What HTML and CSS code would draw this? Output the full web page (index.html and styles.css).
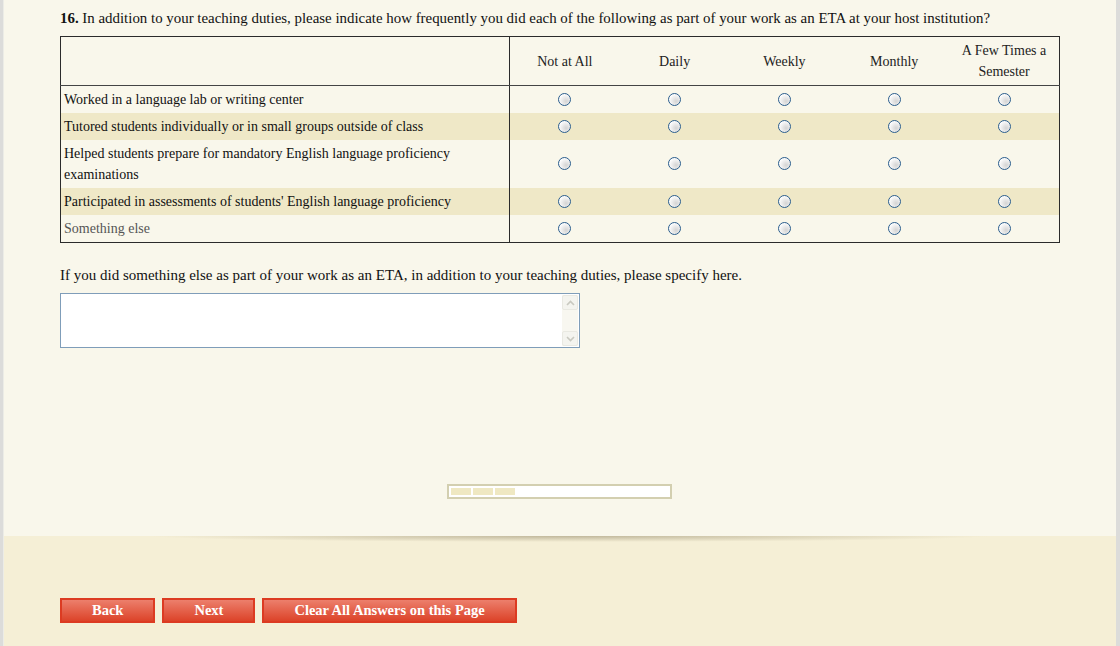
FILE: index.html
```html
<!DOCTYPE html>
<html lang="en">
<head>
    <meta charset="UTF-8">
    <title>ETA Survey - Question 16</title>
    <link rel="stylesheet" href="styles.css">
</head>
<body>
    <div class="page">
        <div class="main">
            <p class="question"><b>16.</b> In addition to your teaching duties, please indicate how frequently you did each of the following as part of your work as an ETA at your host institution?</p>
            <table class="grid">
                <thead>
                    <tr>
                        <th class="label-col"></th>
                        <th>Not at All</th>
                        <th>Daily</th>
                        <th>Weekly</th>
                        <th>Monthly</th>
                        <th>A Few Times a<br>Semester</th>
                    </tr>
                </thead>
                <tbody>
                    <tr>
                        <td class="label">Worked in a language lab or writing center</td>
                        <td><input class="radio" type="radio" name="r1"></td>
                        <td><input class="radio" type="radio" name="r1"></td>
                        <td><input class="radio" type="radio" name="r1"></td>
                        <td><input class="radio" type="radio" name="r1"></td>
                        <td><input class="radio" type="radio" name="r1"></td>
                    </tr>
                    <tr class="alt">
                        <td class="label">Tutored students individually or in small groups outside of class</td>
                        <td><input class="radio" type="radio" name="r2"></td>
                        <td><input class="radio" type="radio" name="r2"></td>
                        <td><input class="radio" type="radio" name="r2"></td>
                        <td><input class="radio" type="radio" name="r2"></td>
                        <td><input class="radio" type="radio" name="r2"></td>
                    </tr>
                    <tr>
                        <td class="label">Helped students prepare for mandatory English language proficiency<br>examinations</td>
                        <td><input class="radio" type="radio" name="r3"></td>
                        <td><input class="radio" type="radio" name="r3"></td>
                        <td><input class="radio" type="radio" name="r3"></td>
                        <td><input class="radio" type="radio" name="r3"></td>
                        <td><input class="radio" type="radio" name="r3"></td>
                    </tr>
                    <tr class="alt">
                        <td class="label">Participated in assessments of students' English language proficiency</td>
                        <td><input class="radio" type="radio" name="r4"></td>
                        <td><input class="radio" type="radio" name="r4"></td>
                        <td><input class="radio" type="radio" name="r4"></td>
                        <td><input class="radio" type="radio" name="r4"></td>
                        <td><input class="radio" type="radio" name="r4"></td>
                    </tr>
                    <tr>
                        <td class="label other">Something else</td>
                        <td><input class="radio" type="radio" name="r5"></td>
                        <td><input class="radio" type="radio" name="r5"></td>
                        <td><input class="radio" type="radio" name="r5"></td>
                        <td><input class="radio" type="radio" name="r5"></td>
                        <td><input class="radio" type="radio" name="r5"></td>
                    </tr>
                </tbody>
            </table>

            <p class="prompt">If you did something else as part of your work as an ETA, in addition to your teaching duties, please specify here.</p>
            <div class="textbox">
                <textarea></textarea>
                <div class="scroll">
                    <span class="arrow">
                        <svg width="9" height="6" viewBox="0 0 9 6"><path d="M1 5 L4.5 1.5 L8 5" fill="none" stroke="#c9c9c0" stroke-width="1.6"/></svg>
                    </span>
                    <span class="arrow">
                        <svg width="9" height="6" viewBox="0 0 9 6"><path d="M1 1 L4.5 4.5 L8 1" fill="none" stroke="#c9c9c0" stroke-width="1.6"/></svg>
                    </span>
                </div>
            </div>

            <div class="progress">
                <span></span><span></span><span></span>
            </div>
        </div>

        <div class="footer">
            <div class="shade"></div>
            <div class="buttons">
                <button class="btn">Back</button>
                <button class="btn">Next</button>
                <button class="btn">Clear All Answers on this Page</button>
            </div>
        </div>
    </div>
</body>
</html>
```

FILE: styles.css
```css
html, body {
    margin: 0;
    padding: 0;
    height: 100%;
}
body {
    font-family: "Liberation Serif", "Times New Roman", serif;
    font-size: 14px;
    color: #111;
    background-color: #dcdcda;
}
.page {
    box-sizing: border-box;
    height: 646px;
    margin: 0 4px 0 3px;
    border-left: 1px solid #ecece6;
    background-color: #f9f7eb;
}
.main {
    padding: 8px 0 37px 56px;
}
.question {
    margin: 0;
    font-size: 14.9px;
    line-height: 20px;
}
.grid {
    margin-top: 8px;
    width: 1000px;
    border-collapse: collapse;
    border: 1px solid #2b2b2b;
}
.grid th {
    width: 110px;
    padding: 3px 0;
    font-weight: normal;
    line-height: 21px;
    color: #222;
    text-align: center;
    border-bottom: 1px solid #444;
}
.grid th.label-col {
    width: 449px;
    border-right: 1px solid #2b2b2b;
}
.grid td {
    padding: 3px 0;
    line-height: 21px;
    text-align: center;
    vertical-align: middle;
}
.grid td.label {
    padding-left: 3px;
    text-align: left;
    border-right: 1px solid #2b2b2b;
}
.grid td.other {
    color: #555;
}
.grid tr.alt td {
    background-color: #efe8c7;
}
.radio {
    appearance: none;
    -webkit-appearance: none;
    display: block;
    width: 13px;
    height: 13px;
    margin: -1px auto 0;
    border: 1px solid #2a5d8c;
    border-radius: 50%;
    background: radial-gradient(circle at 65% 65%, #d4d4d4, #ffffff 75%);
    box-sizing: border-box;
}
.prompt {
    margin: 22px 0 8px;
    font-size: 15px;
    line-height: 20px;
}
.textbox {
    display: flex;
    width: 520px;
    height: 55px;
    box-sizing: border-box;
    border: 1px solid #7f9db9;
    background-color: #fff;
}
.textbox textarea {
    flex: 1;
    border: none;
    resize: none;
    outline: none;
    padding: 2px;
    font-family: inherit;
    font-size: 14px;
}
.scroll {
    width: 16px;
    margin: 1px 1px 1px 0;
    display: flex;
    flex-direction: column;
    justify-content: space-between;
    background-color: #f8f7f0;
}
.arrow {
    display: flex;
    align-items: center;
    justify-content: center;
    height: 15px;
    box-sizing: border-box;
    border: 1px solid #e9e9e2;
    border-radius: 2px;
    background-color: #f4f4ef;
}
.progress {
    display: flex;
    gap: 2px;
    width: 225px;
    height: 15px;
    box-sizing: border-box;
    margin: 136px 0 0 387px;
    padding: 2px;
    border: 2px solid #d3cfb0;
    background-color: #fff;
}
.progress span {
    width: 20px;
    height: 7px;
    background-color: #efe8c2;
}
.footer {
    height: 111px;
    background-color: #f5efd6;
}
.shade {
    width: 840px;
    height: 6px;
    margin: 0 auto 0 146px;
    background: radial-gradient(ellipse 50% 100% at 50% 0, rgba(140, 128, 96, 0.5), rgba(140, 128, 96, 0) 100%);
}
.buttons {
    display: flex;
    gap: 7px;
    padding: 57px 0 0 56px;
    margin-top: -1px;
}
.btn {
    height: 25px;
    padding: 0 30px;
    border: 2px solid #dc3b22;
    background: linear-gradient(#ec7f6c, #dc4329);
    color: #fff;
    font-family: "Liberation Serif", "Times New Roman", serif;
    font-size: 14.5px;
    font-weight: bold;
    line-height: 19px;
    cursor: pointer;
}
```
